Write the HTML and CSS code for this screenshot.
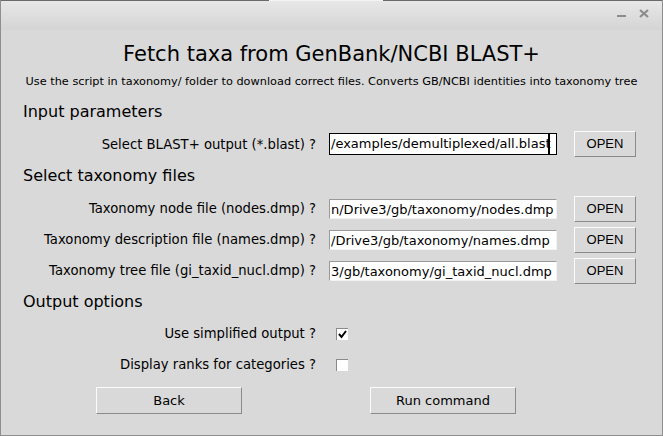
FILE: index.html
```html
<!DOCTYPE html>
<html>
<head>
<meta charset="utf-8">
<link rel="stylesheet" href="styles.css">
</head>
<body>
<div class="window">
  <div class="titlebar">
    <div class="topline"><span class="seg dark a"></span><span class="seg light"></span><span class="seg dark b"></span></div>
    <div class="controls">
      <span class="min"></span>
      <svg class="close" width="10" height="9" viewBox="0 0 10 9"><path d="M1 1L9 8M9 1L1 8" stroke="#8c8c8c" stroke-width="2.2"/></svg>
    </div>
  </div>
  <div class="content">
    <div class="title">Fetch taxa from GenBank/NCBI BLAST+</div>
    <div class="subtitle">Use the script in taxonomy/ folder to download correct files. Converts GB/NCBI identities into taxonomy tree</div>
    <div class="header h1">Input parameters</div>
    <div class="row r1">
      <div class="label">Select BLAST+ output (*.blast) ?</div>
      <div class="entry focus">/examples/demultiplexed/all.blast<span class="caret"></span></div>
      <div class="btn open">OPEN</div>
    </div>
    <div class="header h2">Select taxonomy files</div>
    <div class="row">
      <div class="label">Taxonomy node file (nodes.dmp) ?</div>
      <div class="entry">n/Drive3/gb/taxonomy/nodes.dmp</div>
      <div class="btn open">OPEN</div>
    </div>
    <div class="row">
      <div class="label">Taxonomy description file (names.dmp) ?</div>
      <div class="entry">/Drive3/gb/taxonomy/names.dmp</div>
      <div class="btn open">OPEN</div>
    </div>
    <div class="row">
      <div class="label">Taxonomy tree file (gi_taxid_nucl.dmp) ?</div>
      <div class="entry">3/gb/taxonomy/gi_taxid_nucl.dmp</div>
      <div class="btn open">OPEN</div>
    </div>
    <div class="header h3">Output options</div>
    <div class="row check">
      <div class="label">Use simplified output ?</div>
      <div class="box"><svg width="9" height="9" viewBox="0 0 9 9"><path d="M1 4L3.5 7L8 1" fill="none" stroke="#000" stroke-width="2"/></svg></div>
    </div>
    <div class="row check">
      <div class="label">Display ranks for categories ?</div>
      <div class="box"></div>
    </div>
    <div class="actions">
      <div class="btn big back">Back</div>
      <div class="btn big run">Run command</div>
    </div>
  </div>
</div>
</body>
</html>
```

FILE: styles.css
```css
html, body {
  margin: 0;
  padding: 0;
  background: #d9d9d9;
}
.window {
  width: 663px;
  height: 436px;
  box-sizing: border-box;
  background: #d9d9d9;
  border-left: 1px solid #8e8e8e;
  border-right: 1px solid #8e8e8e;
  border-bottom: 1px solid #8e8e8e;
  font-family: "DejaVu Sans", sans-serif;
  color: #111;
  overflow: hidden;
}
.titlebar {
  height: 30px;
  position: relative;
  background: linear-gradient(#e8e8e8, #d4d4d4);
  border-radius: 4px 4px 0 0;
}
.topline {
  display: flex;
  height: 1px;
}
.seg.dark { background: #6a6a6a; }
.seg.a { width: 268px; }
.seg.light { width: 114px; background: #f4f4f4; }
.seg.b { flex: 1; }
.controls {
  position: absolute;
  left: 616px;
  top: 9px;
  display: flex;
  align-items: center;
  gap: 13px;
}
.min {
  width: 9px;
  height: 2px;
  background: #8c8c8c;
  margin-top: 4px;
}
.content {
  padding-top: 8px;
}
.title {
  height: 32px;
  line-height: 32px;
  text-align: center;
  font-size: 21px;
  color: #000;
}
.subtitle {
  height: 24px;
  line-height: 24px;
  text-align: center;
  font-size: 11.3px;
  color: #000;
}
.header {
  padding-left: 22px;
  font-size: 16px;
  color: #000;
}
.h1 { height: 36px; line-height: 36px; }
.h2 { height: 35px; line-height: 35px; }
.h3 { height: 32px; line-height: 32px; }
.row {
  display: grid;
  grid-template-columns: 316px 240px 79px;
  align-items: center;
  height: 31px;
}
.row.r1 { height: 28px; }
.label {
  text-align: right;
  font-size: 13.2px;
  padding-right: 1px;
  color: #000;
}
.entry {
  margin-left: 12px;
  height: 20px;
  line-height: 19px;
  box-sizing: border-box;
  background: #fff;
  font-size: 13px;
  padding-left: 1px;
  white-space: nowrap;
  overflow: hidden;
  border-top: 1px solid #9a9a9a;
  border-left: 1px solid #9a9a9a;
  border-bottom: 1px solid #f2f2f2;
  border-right: 1px solid #f2f2f2;
  color: #000;
  position: relative;
}
.entry.focus {
  height: 22px;
  line-height: 20px;
  border: 1px solid #000;
}
.caret {
  position: absolute;
  left: 218px;
  top: 0;
  width: 2px;
  height: 20px;
  background: #000;
}
.btn {
  box-sizing: border-box;
  background: #d9d9d9;
  border-top: 1px solid #fbfbfb;
  border-left: 1px solid #fbfbfb;
  border-bottom: 1px solid #8a8a8a;
  border-right: 1px solid #8a8a8a;
  text-align: center;
  color: #000;
  white-space: nowrap;
}
.open {
  margin-left: 17px;
  width: 62px;
  height: 26px;
  line-height: 24px;
  font-family: "Liberation Sans", Arial, sans-serif;
  font-size: 13px;
}
.check {
  grid-template-columns: 316px 20px;
}
.box {
  margin-left: 19px;
  width: 12px;
  height: 12px;
  box-sizing: border-box;
  background: #fff;
  border-top: 1px solid #8a8a8a;
  border-left: 1px solid #8a8a8a;
  display: flex;
  align-items: center;
  justify-content: center;
}
.actions {
  display: flex;
  padding-top: 7px;
  padding-left: 95px;
  gap: 128px;
}
.big {
  width: 146px;
  height: 27px;
  line-height: 25px;
  font-size: 13px;
}
```
